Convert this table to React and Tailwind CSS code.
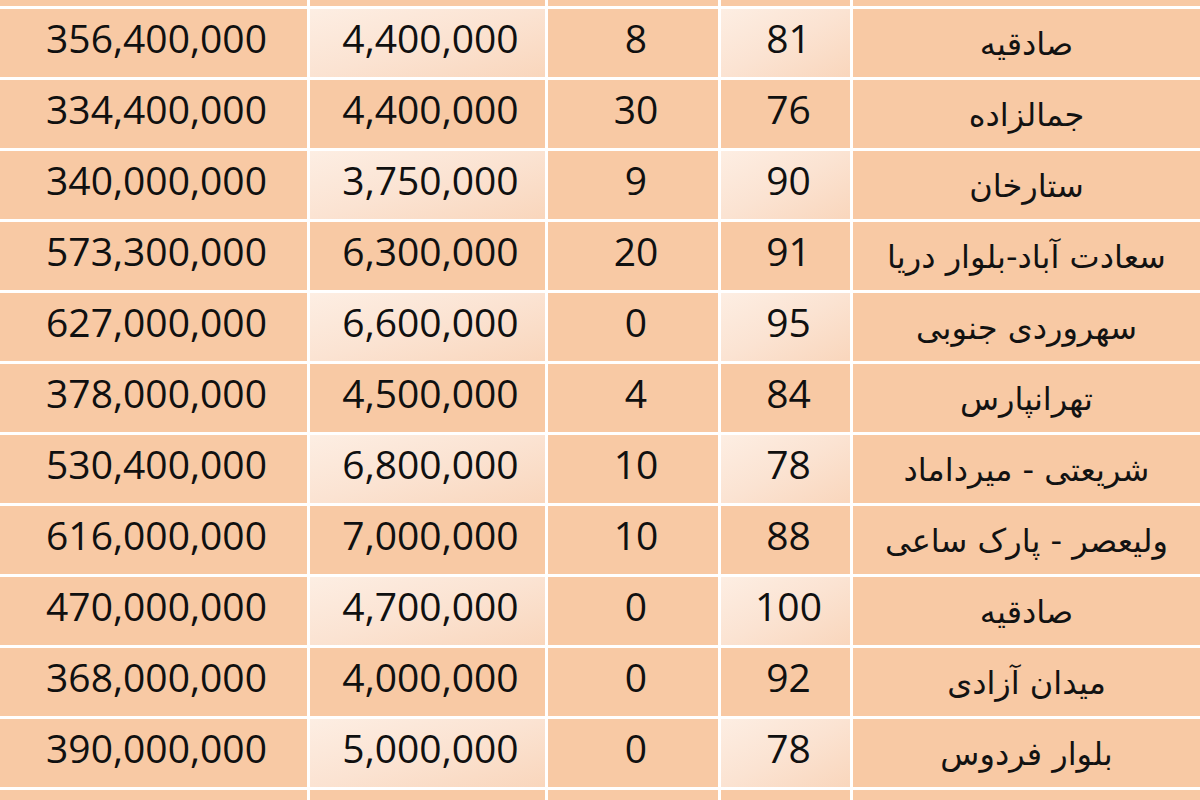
const rows = [
  ['356,400,000', '4,400,000', '8', '81', 'صادقیه'],
  ['334,400,000', '4,400,000', '30', '76', 'جمالزاده'],
  ['340,000,000', '3,750,000', '9', '90', 'ستارخان'],
  ['573,300,000', '6,300,000', '20', '91', 'سعادت آباد-بلوار دریا'],
  ['627,000,000', '6,600,000', '0', '95', 'سهروردی جنوبی'],
  ['378,000,000', '4,500,000', '4', '84', 'تهرانپارس'],
  ['530,400,000', '6,800,000', '10', '78', 'شریعتی - میرداماد'],
  ['616,000,000', '7,000,000', '10', '88', 'ولیعصر - پارک ساعی'],
  ['470,000,000', '4,700,000', '0', '100', 'صادقیه'],
  ['368,000,000', '4,000,000', '0', '92', 'میدان آزادی'],
  ['390,000,000', '5,000,000', '0', '78', 'بلوار فردوس'],
]

const peach = 'bg-[#f8c9a4]'
const light = 'bg-gradient-to-br from-[#fdeee3] via-[#fbe3d2] to-[#f9d6bc]'

function Cell({ children, lit, persian }) {
  return (
    <div
      className={`h-[68px] flex items-end justify-center ${persian ? 'pb-[17px]' : 'pb-[20px] pl-[6px]'} ${lit ? light : peach}`}
    >
      {persian ? (
        <span
          dir="rtl"
          className="text-[32px] leading-none text-[#121212]"
          style={{ fontFamily: '"DejaVu Sans", Tahoma, sans-serif' }}
        >
          {children}
        </span>
      ) : (
        <span
          className="text-[39px] leading-none text-[#101010]"
          style={{ fontFamily: '"Open Sans", "Liberation Sans", sans-serif' }}
        >
          {children}
        </span>
      )}
    </div>
  )
}

function EdgeRow({ h }) {
  return (
    <>
      {[0, 1, 2, 3, 4].map(i => (
        <div key={i} className={`${h} ${peach}`} />
      ))}
    </>
  )
}

export default function App() {
  return (
    <div className="w-[1200px] h-[800px] overflow-hidden bg-white">
      <div className="grid grid-cols-[307px_235px_170px_129px_1fr] gap-[3px] bg-white">
        <EdgeRow h="h-[6px]" />
        {rows.map((r, idx) => {
          const odd = idx % 2 === 0
          return [
            <Cell key={idx + 'a'}>{r[0]}</Cell>,
            <Cell key={idx + 'b'} lit={odd}>{r[1]}</Cell>,
            <Cell key={idx + 'c'}>{r[2]}</Cell>,
            <Cell key={idx + 'd'} lit={odd}>{r[3]}</Cell>,
            <Cell key={idx + 'e'} persian>{r[4]}</Cell>,
          ]
        })}
        <EdgeRow h="h-[12px]" />
      </div>
    </div>
  )
}
